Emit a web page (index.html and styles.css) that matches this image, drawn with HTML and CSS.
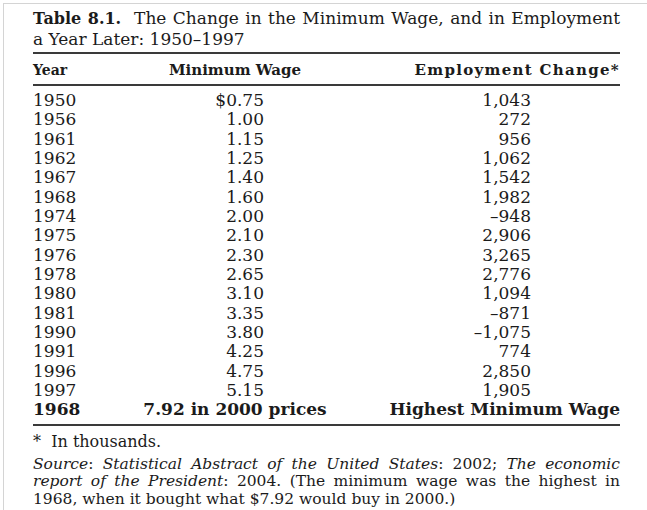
FILE: index.html
```html
<!DOCTYPE html>
<html lang="en">
  <head>
    <meta charset="UTF-8" />
    <meta name="viewport" content="width=device-width, initial-scale=1.0" />
    <title>Table 8.1</title>
    <link rel="stylesheet" href="styles.css">
  </head>
  <body>
    <div class="page">
      <div class="sheet">
        <h2 class="caption">
          <span class="line"><b>Table 8.1.</b>&nbsp; The Change in the Minimum Wage, and in Employment</span>
          <span class="line last">a Year Later: 1950–1997</span>
        </h2>
        <table class="wage-table">
          <thead>
            <tr>
              <th class="col-year">Year</th>
              <th class="col-wage">Minimum Wage</th>
              <th class="col-emp wide">Employment Change*</th>
            </tr>
          </thead>
          <tbody>
            <tr class="first"><td>1950</td><td class="num-wage">$0.75</td><td class="num-emp">1,043</td></tr>
            <tr><td>1956</td><td class="num-wage">1.00</td><td class="num-emp">272</td></tr>
            <tr><td>1961</td><td class="num-wage">1.15</td><td class="num-emp">956</td></tr>
            <tr><td>1962</td><td class="num-wage">1.25</td><td class="num-emp">1,062</td></tr>
            <tr><td>1967</td><td class="num-wage">1.40</td><td class="num-emp">1,542</td></tr>
            <tr><td>1968</td><td class="num-wage">1.60</td><td class="num-emp">1,982</td></tr>
            <tr><td>1974</td><td class="num-wage">2.00</td><td class="num-emp">–948</td></tr>
            <tr><td>1975</td><td class="num-wage">2.10</td><td class="num-emp">2,906</td></tr>
            <tr><td>1976</td><td class="num-wage">2.30</td><td class="num-emp">3,265</td></tr>
            <tr><td>1978</td><td class="num-wage">2.65</td><td class="num-emp">2,776</td></tr>
            <tr><td>1980</td><td class="num-wage">3.10</td><td class="num-emp">1,094</td></tr>
            <tr><td>1981</td><td class="num-wage">3.35</td><td class="num-emp">–871</td></tr>
            <tr><td>1990</td><td class="num-wage">3.80</td><td class="num-emp">–1,075</td></tr>
            <tr><td>1991</td><td class="num-wage">4.25</td><td class="num-emp">774</td></tr>
            <tr><td>1996</td><td class="num-wage">4.75</td><td class="num-emp">2,850</td></tr>
            <tr><td>1997</td><td class="num-wage">5.15</td><td class="num-emp">1,905</td></tr>
            <tr class="total">
              <td>1968</td>
              <td class="col-wage">7.92 in 2000 prices</td>
              <td class="col-emp">Highest Minimum Wage</td>
            </tr>
          </tbody>
        </table>
        <p class="note">*&nbsp; In thousands.</p>
        <p class="source">
          <span class="line"><i>Source</i>: <i>Statistical Abstract of the United States</i>: 2002; <i>The economic</i></span>
          <span class="line"><i>report of the President</i>: 2004. (The minimum wage was the highest in</span>
          <span class="line last">1968, when it bought what $7.92 would buy in 2000.)</span>
        </p>
      </div>
    </div>
  </body>
</html>
```

FILE: styles.css
```css
* {
  box-sizing: border-box;
}
html,
body {
  margin: 0;
  padding: 0;
  background: #fff;
}
.page {
  margin: 3px 0 0 3px;
  height: 507px;
  border-top: solid 1px #d4d4d4;
  border-left: solid 1px #d4d4d4;
  color: #1b1b1b;
  font-family: "DejaVu Serif", "Liberation Serif", serif;
}
.sheet {
  width: 587px;
  margin-left: 29px;
  padding-top: 4px;
}
.line {
  display: block;
  text-align: justify;
  text-align-last: justify;
  white-space: nowrap;
}
.line.last {
  text-align-last: left;
}
.caption {
  margin: 0;
  font-size: 17px;
  font-weight: normal;
  line-height: 20px;
}
.caption b {
  font-size: 16px;
}
.wage-table {
  width: 587px;
  margin-top: 3px;
  border-collapse: collapse;
  border-top: solid 2px #3a3a3a;
  border-bottom: solid 2px #3a3a3a;
  font-size: 17px;
}
.wage-table th {
  padding: 6px 0 4px;
  line-height: 20px;
  font-size: 15px;
  border-bottom: solid 2px #3a3a3a;
}
.wage-table th.col-year {
  font-size: 14px;
}
.wage-table th.wide {
  letter-spacing: 1.3px;
}
.wage-table td {
  padding: 0;
  height: 19.33px;
  line-height: 19.33px;
}
.wage-table tr.first td {
  padding-top: 5px;
  height: 24.33px;
}
.wage-table tr.total td {
  font-weight: bold;
  padding-bottom: 4.5px;
  height: 23.83px;
}
.col-year {
  width: 107px;
  text-align: left;
}
.col-wage {
  width: 190px;
  text-align: center;
}
.col-emp {
  width: 290px;
  text-align: right;
}
.num-wage {
  text-align: right;
  padding-right: 66px !important;
}
.num-emp {
  text-align: right;
  padding-right: 89px !important;
}
.note {
  margin: 7px 0 0;
  font-size: 16px;
  line-height: 18px;
}
.source {
  margin: 5px 0 0;
  font-size: 15.5px;
  line-height: 17.3px;
}
```
